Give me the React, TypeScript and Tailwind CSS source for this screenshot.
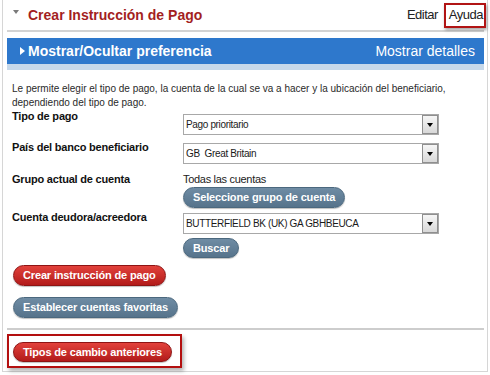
import React from 'react';

const Select = ({ value }: { value: string }) => (
  <div className="flex h-[21px] w-[256px] items-center justify-between border border-[#a8a8a8] bg-white pl-[2px]">
    <span className="whitespace-pre text-[10px] tracking-[-0.35px] text-[#1a1a1a]">{value}</span>
    <span className="flex h-full w-[16px] items-center justify-center border border-[#8f8f8f] bg-gradient-to-b from-[#f6f6f6] to-[#d8d8d8]">
      <span className="h-0 w-0 border-x-[3.5px] border-t-[4px] border-x-transparent border-t-black" />
    </span>
  </div>
);

const Btn = ({ children, red = false, h = 'h-[21px]' }: { children: React.ReactNode; red?: boolean; h?: string }) => (
  <button
    className={`flex ${h} items-center whitespace-nowrap rounded-full border px-[9px] text-[11px] font-bold tracking-[-0.15px] text-white shadow-[0_1px_1px_rgba(0,0,0,0.25)] ${
      red
        ? 'border-[#8e1414] bg-gradient-to-b from-[#e2413b] to-[#b21a1a]'
        : 'border-[#4b687e] bg-gradient-to-b from-[#6f8ca4] to-[#56738b]'
    }`}
  >
    {children}
  </button>
);

const Label = ({ children }: { children: React.ReactNode }) => (
  <div className="w-[171px] shrink-0 text-[11px] font-bold leading-[13px] tracking-[-0.2px] text-[#111]">{children}</div>
);

const App: React.FC = () => {
  return (
    <div className="h-[375px] w-[490px] bg-white font-['Liberation_Sans',Arial,sans-serif] text-[#222]">
      <div className="ml-[2px] h-[372px] w-[486px] border-x border-b border-[#d6d6d6] pl-[4px] pr-[1px]">
        {/* Header */}
        <div className="flex h-[30px] items-center pl-[6px]">
          <span className="mb-[6px] h-0 w-0 border-x-[3px] border-t-[4px] border-x-transparent border-t-[#7a7a7a]" />
          <h1 className="ml-[9px] text-[14px] font-bold text-[#a31f1f]">Crear Instrucción de Pago</h1>
          <div className="ml-auto flex items-center">
            <span className="text-[13px] tracking-[-0.5px] text-[#222]">Editar</span>
            <span className="ml-[6px] flex h-[25px] items-center border-2 border-[#b11414] pl-[3px] pr-[1px] text-[13px] tracking-[-0.5px] text-[#222] shadow-[1px_2px_3px_rgba(0,0,0,0.35)]">
              Ayuda
            </span>
          </div>
        </div>
        <div className="mr-[2px] h-[2px] bg-[#d3d3d3]" />

        {/* Preference bar */}
        <div className="mr-[2px] mt-[6px] flex h-[26px] items-center justify-between bg-[#2e78cc] pl-[13px] pr-[9px] text-white">
          <div className="flex items-center">
            <span className="h-0 w-0 border-y-[4.5px] border-l-[5px] border-y-transparent border-l-white" />
            <span className="ml-[3px] text-[14px] font-bold">Mostrar/Ocultar preferencia</span>
          </div>
          <span className="text-[14px]">Mostrar detalles</span>
        </div>
        <div className="mr-[2px] h-[6px] bg-[#c6d8ea]" />

        {/* Form */}
        <div className="flex flex-col items-start pl-[5px]">
          <p className="mt-[12px] text-[10px] leading-[14px] text-[#2a2a2a]">
            Le permite elegir el tipo de pago, la cuenta de la cual se va a hacer y la ubicación del beneficiario,
            <br />
            dependiendo del tipo de pago.
          </p>

          <div className="flex">
            <Label>Tipo de pago</Label>
            <div className="mt-[4px]">
              <Select value="Pago prioritario" />
            </div>
          </div>

          <div className="mt-[6px] flex">
            <Label>País del banco beneficiario</Label>
            <div className="mt-[2px]">
              <Select value="GB  Great Britain" />
            </div>
          </div>

          <div className="mt-[9px] flex">
            <Label>Grupo actual de cuenta</Label>
            <div className="flex flex-col items-start">
              <span className="text-[11px] leading-[13px] tracking-[-0.3px] text-[#222]">Todas las cuentas</span>
              <div className="mt-[1px] flex">
                <Btn>Seleccione grupo de cuenta</Btn>
              </div>
            </div>
          </div>

          <div className="mt-[3px] flex">
            <Label>Cuenta deudora/acreedora</Label>
            <div className="flex flex-col items-start">
              <div className="mt-[2px]">
                <Select value="BUTTERFIELD BK (UK) GA GBHBEUCA" />
              </div>
              <div className="mt-[4px] flex">
                <Btn h="h-[20px]">Buscar</Btn>
              </div>
            </div>
          </div>

          <div className="ml-[1px] mt-[7px] flex">
            <Btn red>Crear instrucción de pago</Btn>
          </div>
          <div className="ml-[1px] mt-[11px] flex">
            <Btn>Establecer cuentas favoritas</Btn>
          </div>
        </div>

        <div className="mr-[2px] mt-[10px] h-[2px] bg-[#cdcdcd]" />

        <div className="mt-[4px] flex h-[34px] w-[175px] items-start border-2 border-[#b30f0f] pl-[4px] pt-[6px] shadow-[2px_3px_4px_rgba(0,0,0,0.3)]">
          <Btn red h="h-[20px]">Tipos de cambio anteriores</Btn>
        </div>
      </div>
    </div>
  );
};

export default App;
